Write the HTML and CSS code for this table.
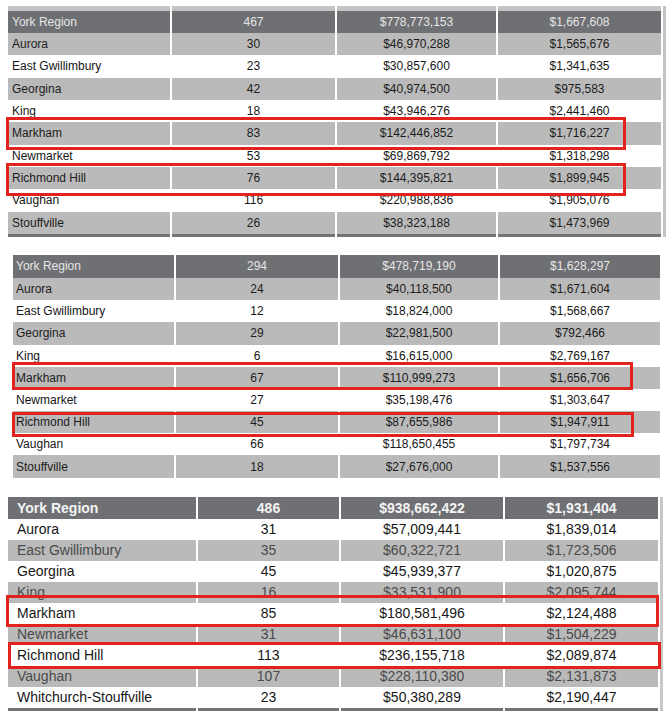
FILE: index.html
```html
<!DOCTYPE html>
<html>
<head>
<meta charset="utf-8">
<link rel="stylesheet" href="styles.css">
</head>
<body>
<div class="page">
  <section class="tbl t1">
    <div class="row strip"><div class="c"></div><div class="c"></div><div class="c"></div><div class="c"></div><div class="c x"></div></div>
    <div class="row h"><div class="c n">York Region</div><div class="c">467</div><div class="c">$778,773,153</div><div class="c">$1,667,608</div><div class="c x"></div></div>
    <div class="row g"><div class="c n">Aurora</div><div class="c">30</div><div class="c">$46,970,288</div><div class="c">$1,565,676</div><div class="c x"></div></div>
    <div class="row"><div class="c n">East Gwillimbury</div><div class="c">23</div><div class="c">$30,857,600</div><div class="c">$1,341,635</div><div class="c x"></div></div>
    <div class="row g"><div class="c n">Georgina</div><div class="c">42</div><div class="c">$40,974,500</div><div class="c">$975,583</div><div class="c x"></div></div>
    <div class="row"><div class="c n">King</div><div class="c">18</div><div class="c">$43,946,276</div><div class="c">$2,441,460</div><div class="c x"></div></div>
    <div class="row g"><div class="c n">Markham</div><div class="c">83</div><div class="c">$142,446,852</div><div class="c">$1,716,227</div><div class="c x"></div></div>
    <div class="row"><div class="c n">Newmarket</div><div class="c">53</div><div class="c">$69,869,792</div><div class="c">$1,318,298</div><div class="c x"></div></div>
    <div class="row g"><div class="c n">Richmond Hill</div><div class="c">76</div><div class="c">$144,395,821</div><div class="c">$1,899,945</div><div class="c x"></div></div>
    <div class="row"><div class="c n">Vaughan</div><div class="c">116</div><div class="c">$220,988,836</div><div class="c">$1,905,076</div><div class="c x"></div></div>
    <div class="row g"><div class="c n">Stouffville</div><div class="c">26</div><div class="c">$38,323,188</div><div class="c">$1,473,969</div><div class="c x"></div></div>
    <div class="row bar"><div class="c"></div><div class="c"></div><div class="c"></div><div class="c"></div><div class="c x"></div></div>
    <div class="hl t1-mk"></div>
    <div class="hl t1-rh"></div>
  </section>

  <section class="tbl t2">
    <div class="row h"><div class="c n">York Region</div><div class="c">294</div><div class="c">$478,719,190</div><div class="c">$1,628,297</div></div>
    <div class="row g"><div class="c n">Aurora</div><div class="c">24</div><div class="c">$40,118,500</div><div class="c">$1,671,604</div></div>
    <div class="row"><div class="c n">East Gwillimbury</div><div class="c">12</div><div class="c">$18,824,000</div><div class="c">$1,568,667</div></div>
    <div class="row g"><div class="c n">Georgina</div><div class="c">29</div><div class="c">$22,981,500</div><div class="c">$792,466</div></div>
    <div class="row"><div class="c n">King</div><div class="c">6</div><div class="c">$16,615,000</div><div class="c">$2,769,167</div></div>
    <div class="row g"><div class="c n">Markham</div><div class="c">67</div><div class="c">$110,999,273</div><div class="c">$1,656,706</div></div>
    <div class="row"><div class="c n">Newmarket</div><div class="c">27</div><div class="c">$35,198,476</div><div class="c">$1,303,647</div></div>
    <div class="row g"><div class="c n">Richmond Hill</div><div class="c">45</div><div class="c">$87,655,986</div><div class="c">$1,947,911</div></div>
    <div class="row"><div class="c n">Vaughan</div><div class="c">66</div><div class="c">$118,650,455</div><div class="c">$1,797,734</div></div>
    <div class="row g"><div class="c n">Stouffville</div><div class="c">18</div><div class="c">$27,676,000</div><div class="c">$1,537,556</div></div>
    <div class="hl t2-mk"></div>
    <div class="hl t2-rh"></div>
  </section>

  <section class="tbl t3">
    <div class="row h"><div class="c n">York Region</div><div class="c">486</div><div class="c">$938,662,422</div><div class="c">$1,931,404</div><div class="c x"></div></div>
    <div class="row"><div class="c n">Aurora</div><div class="c">31</div><div class="c">$57,009,441</div><div class="c">$1,839,014</div><div class="c x"></div></div>
    <div class="row g"><div class="c n">East Gwillimbury</div><div class="c">35</div><div class="c">$60,322,721</div><div class="c">$1,723,506</div><div class="c x"></div></div>
    <div class="row"><div class="c n">Georgina</div><div class="c">45</div><div class="c">$45,939,377</div><div class="c">$1,020,875</div><div class="c x"></div></div>
    <div class="row g"><div class="c n">King</div><div class="c">16</div><div class="c">$33,531,900</div><div class="c">$2,095,744</div><div class="c x"></div></div>
    <div class="row"><div class="c n">Markham</div><div class="c">85</div><div class="c">$180,581,496</div><div class="c">$2,124,488</div><div class="c x"></div></div>
    <div class="row g"><div class="c n">Newmarket</div><div class="c">31</div><div class="c">$46,631,100</div><div class="c">$1,504,229</div><div class="c x"></div></div>
    <div class="row"><div class="c n">Richmond Hill</div><div class="c">113</div><div class="c">$236,155,718</div><div class="c">$2,089,874</div><div class="c x"></div></div>
    <div class="row g"><div class="c n">Vaughan</div><div class="c">107</div><div class="c">$228,110,380</div><div class="c">$2,131,873</div><div class="c x"></div></div>
    <div class="row"><div class="c n">Whitchurch-Stouffville</div><div class="c">23</div><div class="c">$50,380,289</div><div class="c">$2,190,447</div><div class="c x"></div></div>
    <div class="row bar"><div class="c"></div><div class="c"></div><div class="c"></div><div class="c"></div><div class="c x"></div></div>
    <div class="hl t3-mk"></div>
    <div class="hl t3-rh"></div>
  </section>
</div>
</body>
</html>
```

FILE: styles.css
```css
* { box-sizing: border-box; margin: 0; padding: 0; }
html, body { background: #ffffff; }
body {
  margin: 0;
  width: 672px;
  height: 722px;
  overflow: hidden;
  font-family: "Liberation Sans", Arial, sans-serif;
  color: #161616;
}
.page { padding-top: 6px; }
.tbl { position: relative; }
.t1 { margin-left: 8px; }
.t2 { margin-left: 13px; margin-top: 18px; }
.t3 { margin-left: 8px; margin-top: 19px; }

.row { display: grid; column-gap: 2px; }
.t1 .row { grid-template-columns: 162px 163px 159px 163px 3px; height: 22.33px; font-size: 12px; }
.t2 .row { grid-template-columns: 161px 162px 158px 160px; height: 22.2px; font-size: 12px; }
.t3 .row { grid-template-columns: 188px 141px 162px 153px 3px; height: 21px; font-size: 14px; }
.t1 .row.h, .t3 .row.h { height: 22px; }
.t2 .row.h { height: 23px; }

.c {
  display: flex;
  align-items: center;
  justify-content: center;
  white-space: nowrap;
  overflow: visible;
}
.c.n { justify-content: flex-start; padding-left: 4px; }
.t2 .c.n { padding-left: 3px; }
.t3 .c.n { padding-left: 9px; }

.g .c { background: #bababa; color: #1c1c1c; }
.t3 .g .c { color: #4a4a4a; }
.h .c { background: #6f7073; color: #e6e6e6; }
.t3 .h .c { font-weight: bold; color: #f4f4f4; }

.row.strip { height: 5px; }
.strip .c { background: #c4c4c4; }
.row.bar { height: 3px; }
.bar .c { background: #757575; }
.t1 .c.x, .t1 .g .c.x, .t1 .h .c.x { background: #c2c2c2; }
.t3 .c.x, .t3 .g .c.x, .t3 .h .c.x { background: #c8c8c8; }

.hl { position: absolute; border: 3px solid #e1221f; }
.t1-mk { left: -2px; top: 111px; width: 620px; height: 33px; }
.t1-rh { left: -2px; top: 157px; width: 620px; height: 33px; }
.t2-mk { left: -1px; top: 107px; width: 621px; height: 28px; }
.t2-rh { left: -1px; top: 157px; width: 622px; height: 25px; }
.t3-mk { left: -2px; top: 98px; width: 653px; height: 32px; }
.t3-rh { left: 0px; top: 145px; width: 653px; height: 27px; }
```
